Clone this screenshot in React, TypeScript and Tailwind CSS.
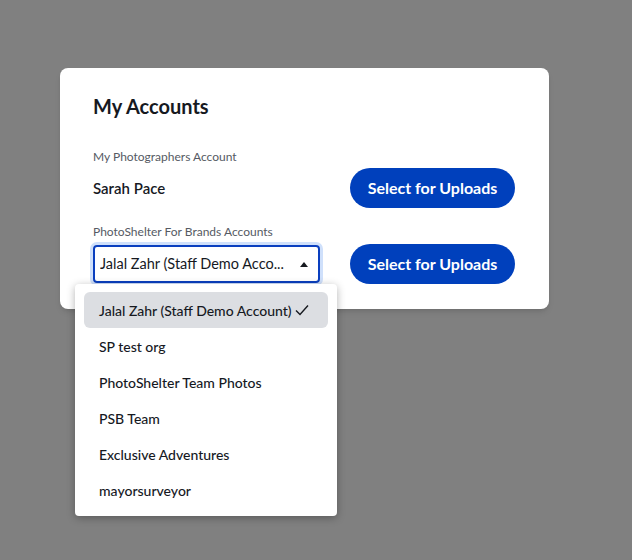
import React from "react";

const accounts = [
  "Jalal Zahr (Staff Demo Account)",
  "SP test org",
  "PhotoShelter Team Photos",
  "PSB Team",
  "Exclusive Adventures",
  "mayorsurveyor",
];

export default function App() {
  return (
    <div
      className="w-[632px] h-[560px] bg-[#808080] relative overflow-hidden"
      style={{ fontFamily: "Lato, 'Noto Sans', sans-serif" }}
    >
      <div className="absolute left-[60px] top-[68px] w-[489px] h-[241px] bg-white rounded-lg shadow-md px-[33px] pt-[26px]">
        <h2 className="text-[20px] font-bold text-[#16191f] leading-[24px]">My Accounts</h2>

        <div className="mt-[32px] text-[12px] text-[#555a63] leading-[14px]">My Photographers Account</div>
        <div className="flex items-center justify-between mt-[4px]">
          <div className="text-[15px] font-semibold text-[#16191f]">Sarah Pace</div>
          <button className="w-[165px] h-[40px] rounded-full bg-[#0040bc] text-white text-[16px] font-bold mr-[1px]">
            Select for Uploads
          </button>
        </div>

        <div className="mt-[17px] text-[12px] text-[#555a63] leading-[14px]">PhotoShelter For Brands Accounts</div>
        <div className="flex items-center justify-between mt-[5px]">
          <div className="w-[227px] h-[38px] rounded-[4px] border-2 border-[#0a3fbf] ring-[3px] ring-[#cfe0fb] flex items-center justify-between pl-[5px] pr-[10px]">
            <span className="text-[14.5px] text-[#16191f] truncate">Jalal Zahr (Staff Demo Acco...</span>
            <svg width="8" height="5" viewBox="0 0 8 5" className="ml-2 shrink-0">
              <path d="M0 5 L4 0 L8 5 Z" fill="#16191f" />
            </svg>
          </div>
          <button className="w-[165px] h-[40px] rounded-full bg-[#0040bc] text-white text-[16px] font-bold mr-[1px]">
            Select for Uploads
          </button>
        </div>
      </div>

      <div className="absolute left-[75px] top-[284px] w-[262px] bg-white rounded-[4px] shadow-[0_2px_8px_rgba(0,0,0,0.3)] px-[9px] py-[8px]">
        {accounts.map((a, i) => (
          <div
            key={a}
            className={
              "h-[36px] flex items-center px-[15px] rounded-[6px] text-[14px] text-[#16191f] font-medium " +
              (i === 0 ? "bg-[#dcdee2]" : "")
            }
          >
            <span>{a}</span>
            {i === 0 && (
              <svg width="14" height="12" viewBox="0 0 14 12" className="ml-[3px]">
                <path d="M1 6.5 L5 10.5 L13 1.5" fill="none" stroke="#16191f" strokeWidth="1.4" />
              </svg>
            )}
          </div>
        ))}
      </div>
    </div>
  );
}
